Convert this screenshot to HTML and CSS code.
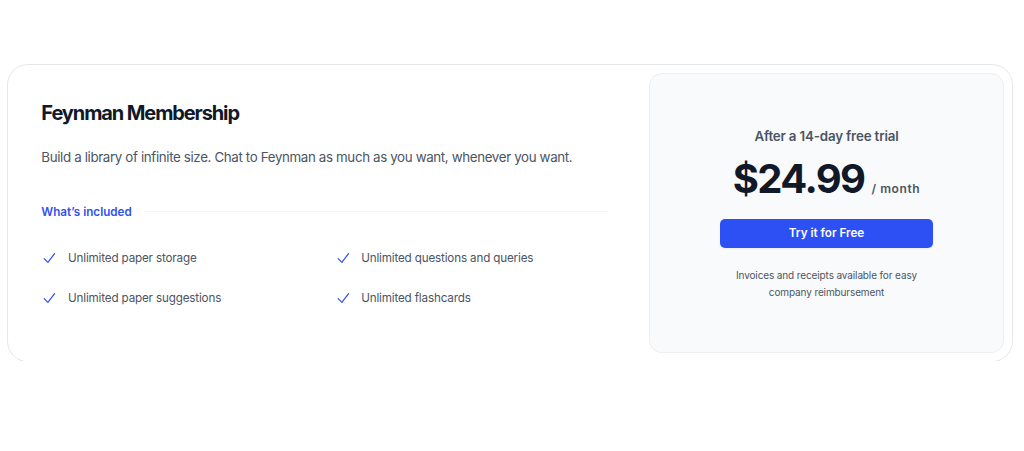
FILE: index.html
```html
<!DOCTYPE html>
<html lang="en">
<head>
<meta charset="utf-8">
<title>Feynman Membership</title>
<link rel="stylesheet" href="styles.css">
</head>
<body>
<div class="page">
  <div class="card">
    <div class="details">
      <h3 class="title">Feynman Membership</h3>
      <p class="desc">Build a library of infinite size. Chat to Feynman as much as you want, whenever you want.</p>
      <div class="included">
        <h4 class="included-label">What’s included</h4>
        <div class="divider"></div>
      </div>
      <ul class="features">
        <li class="feature">
          <svg class="check" viewBox="0 0 20 20" fill="currentColor" aria-hidden="true"><path fill-rule="evenodd" d="M16.704 4.153a.75.75 0 01.143 1.052l-8 10.5a.75.75 0 01-1.127.075l-4.5-4.5a.75.75 0 011.06-1.060l3.894 3.893 7.48-9.817a.75.75 0 011.05-.143z" clip-rule="evenodd"/></svg>
          Unlimited paper storage
        </li>
        <li class="feature">
          <svg class="check" viewBox="0 0 20 20" fill="currentColor" aria-hidden="true"><path fill-rule="evenodd" d="M16.704 4.153a.75.75 0 01.143 1.052l-8 10.5a.75.75 0 01-1.127.075l-4.5-4.5a.75.75 0 011.06-1.060l3.894 3.893 7.48-9.817a.75.75 0 011.05-.143z" clip-rule="evenodd"/></svg>
          Unlimited questions and queries
        </li>
        <li class="feature">
          <svg class="check" viewBox="0 0 20 20" fill="currentColor" aria-hidden="true"><path fill-rule="evenodd" d="M16.704 4.153a.75.75 0 01.143 1.052l-8 10.5a.75.75 0 01-1.127.075l-4.5-4.5a.75.75 0 011.06-1.060l3.894 3.893 7.48-9.817a.75.75 0 011.05-.143z" clip-rule="evenodd"/></svg>
          Unlimited paper suggestions
        </li>
        <li class="feature">
          <svg class="check" viewBox="0 0 20 20" fill="currentColor" aria-hidden="true"><path fill-rule="evenodd" d="M16.704 4.153a.75.75 0 01.143 1.052l-8 10.5a.75.75 0 01-1.127.075l-4.5-4.5a.75.75 0 011.06-1.060l3.894 3.893 7.48-9.817a.75.75 0 011.05-.143z" clip-rule="evenodd"/></svg>
          Unlimited flashcards
        </li>
      </ul>
    </div>
    <div class="pricing">
      <div class="panel">
        <div class="panel-inner">
          <p class="trial">After a 14-day free trial</p>
          <p class="price"><span class="amount">$24.99</span><span class="period">/ month</span></p>
          <a href="#" class="cta">Try it for Free</a>
          <p class="note">Invoices and receipts available for easy company reimbursement</p>
        </div>
      </div>
    </div>
  </div>
</div>
</body>
</html>
```

FILE: styles.css
```css
* { box-sizing: border-box; }
html, body { margin: 0; padding: 0; background: #ffffff; }
body {
  font-family: Inter, "Noto Sans", "Liberation Sans", sans-serif;
  color: #111827;
  -webkit-font-smoothing: antialiased;
}
.page {
  padding: 65px 0 0 8px;
}
.card {
  width: 1004px;
  display: flex;
  border-radius: 20px;
  box-shadow: 0 0 0 1px #e5e7eb;
}
.details {
  flex: 1 1 auto;
  padding: 33.33px;
}
.title {
  margin: 0;
  font-size: 20px;
  line-height: 30px;
  font-weight: 700;
  letter-spacing: -1.1px;
  color: #111827;
}
.desc {
  margin: 17.5px 0 0;
  font-size: 13.33px;
  line-height: 23.33px;
  letter-spacing: -0.36px;
  color: #4b5563;
}
.included {
  margin-top: 32.5px;
  display: flex;
  align-items: center;
  gap: 13.33px;
}
.included-label {
  margin: 0;
  flex: none;
  font-size: 11.67px;
  line-height: 20px;
  font-weight: 600;
  color: #3052f2;
}
.divider {
  flex: 1 1 auto;
  height: 1px;
  background: #f3f4f6;
}
.features {
  list-style: none;
  margin: 26.67px 0 0;
  padding: 0;
  display: grid;
  grid-template-columns: 1fr 1fr;
  gap: 20px;
  font-size: 11.67px;
  line-height: 20px;
  letter-spacing: -0.16px;
  color: #4b5563;
}
.feature {
  display: flex;
  gap: 10px;
}
.check {
  flex: none;
  width: 16.67px;
  height: 20px;
  color: #3052f2;
}
.pricing {
  flex: 0 0 371px;
  padding: 8px;
}
.panel {
  height: 100%;
  border-radius: 13.33px;
  background: #f9fafb;
  box-shadow: inset 0 0 0 1px rgba(17, 24, 39, 0.05);
  display: flex;
  flex-direction: column;
  justify-content: center;
  padding: 52.5px 0;
  text-align: center;
}
.panel-inner {
  width: 213px;
  margin: 0 auto;
}
.trial {
  margin: 0;
  font-size: 13.33px;
  line-height: 20px;
  font-weight: 600;
  letter-spacing: -0.16px;
  color: #4b5563;
}
.price {
  margin: 13px 0 0;
  display: flex;
  align-items: baseline;
  justify-content: center;
  gap: 7px;
}
.amount {
  font-size: 40px;
  line-height: 40px;
  font-weight: 700;
  letter-spacing: -1.6px;
  color: #111827;
}
.period {
  font-size: 12px;
  line-height: 20px;
  font-weight: 600;
  letter-spacing: 0.6px;
  color: #4b5563;
}
.cta {
  display: block;
  margin-top: 20px;
  height: 29.5px;
  line-height: 29.5px;
  border-radius: 5px;
  background: #2d50f5;
  color: #ffffff;
  font-size: 11.67px;
  font-weight: 600;
  text-decoration: none;
  box-shadow: 0 1px 2px rgba(0, 0, 0, 0.05);
}
.note {
  margin: 19px 0 0;
  font-size: 10px;
  line-height: 16.67px;
  letter-spacing: -0.12px;
  color: #4b5563;
}
```
